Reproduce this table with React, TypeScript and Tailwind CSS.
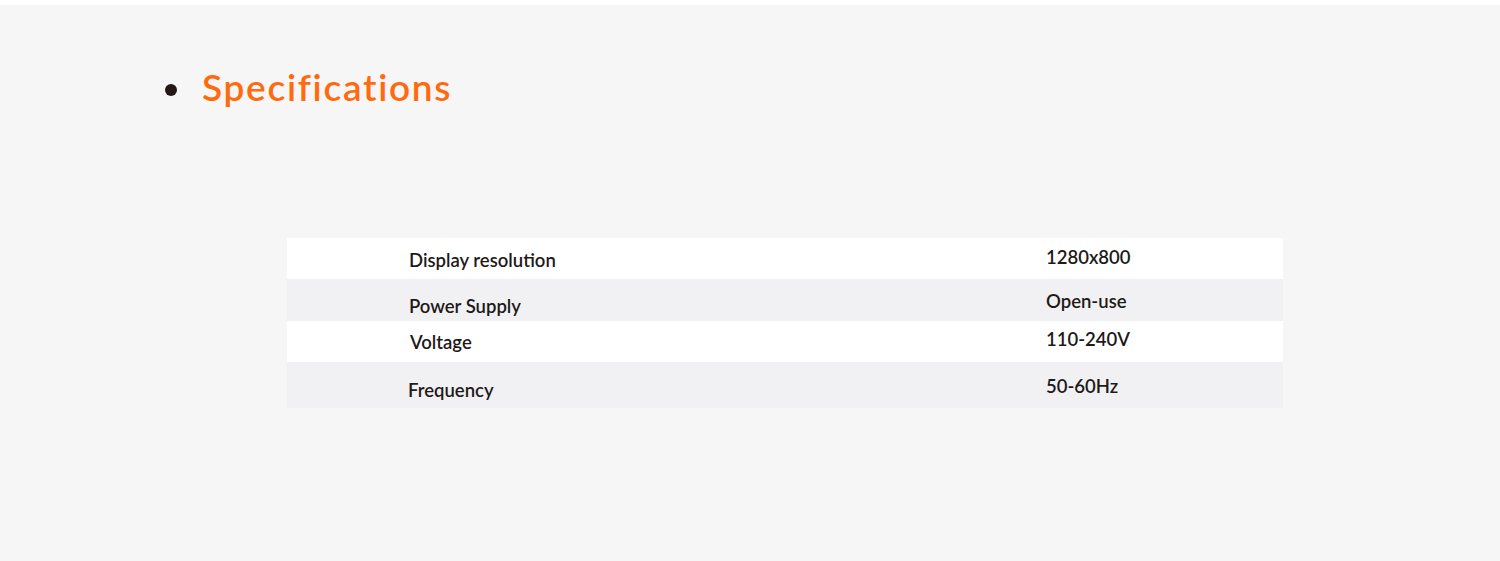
const specs = [
  { label: 'Display resolution', value: '1280x800', row: 'h-[41px] bg-white', labelPad: 'pt-[10px] pl-[122px]', valuePad: 'pt-[7px]' },
  { label: 'Power Supply', value: 'Open-use', row: 'h-[42px] bg-[#f1f1f3]', labelPad: 'pt-[15px] pl-[122px]', valuePad: 'pt-[10px]' },
  { label: 'Voltage', value: '110-240V', row: 'h-[41px] bg-white', labelPad: 'pt-[9px] pl-[123px]', valuePad: 'pt-[6px]' },
  { label: 'Frequency', value: '50-60Hz', row: 'h-[46px] bg-[#f1f1f3]', labelPad: 'pt-[16px] pl-[121px]', valuePad: 'pt-[12px]' },
]

export default function App() {
  return (
    <div className="h-[561px] w-[1500px] border-t-[5px] border-white bg-[#f6f6f6] font-['Lato',sans-serif]">
      <div className="flex items-center gap-[25px] pl-[165px] pt-[57px]">
        <span className="mt-[5px] block h-[12px] w-[12px] rounded-full bg-[#231815]" />
        <h2 className="text-[37px] font-semibold leading-[50px] tracking-[1.7px] text-[#ff6a0e]">Specifications</h2>
      </div>

      <div className="ml-[287px] mt-[126px] w-[996px] text-[18.5px] font-semibold leading-[24px] text-[#1e1a19]">
        {specs.map((s) => (
          <div key={s.label} className={`flex ${s.row}`}>
            <div className={`w-[759px] ${s.labelPad}`}>{s.label}</div>
            <div className={s.valuePad}>{s.value}</div>
          </div>
        ))}
      </div>
    </div>
  )
}
